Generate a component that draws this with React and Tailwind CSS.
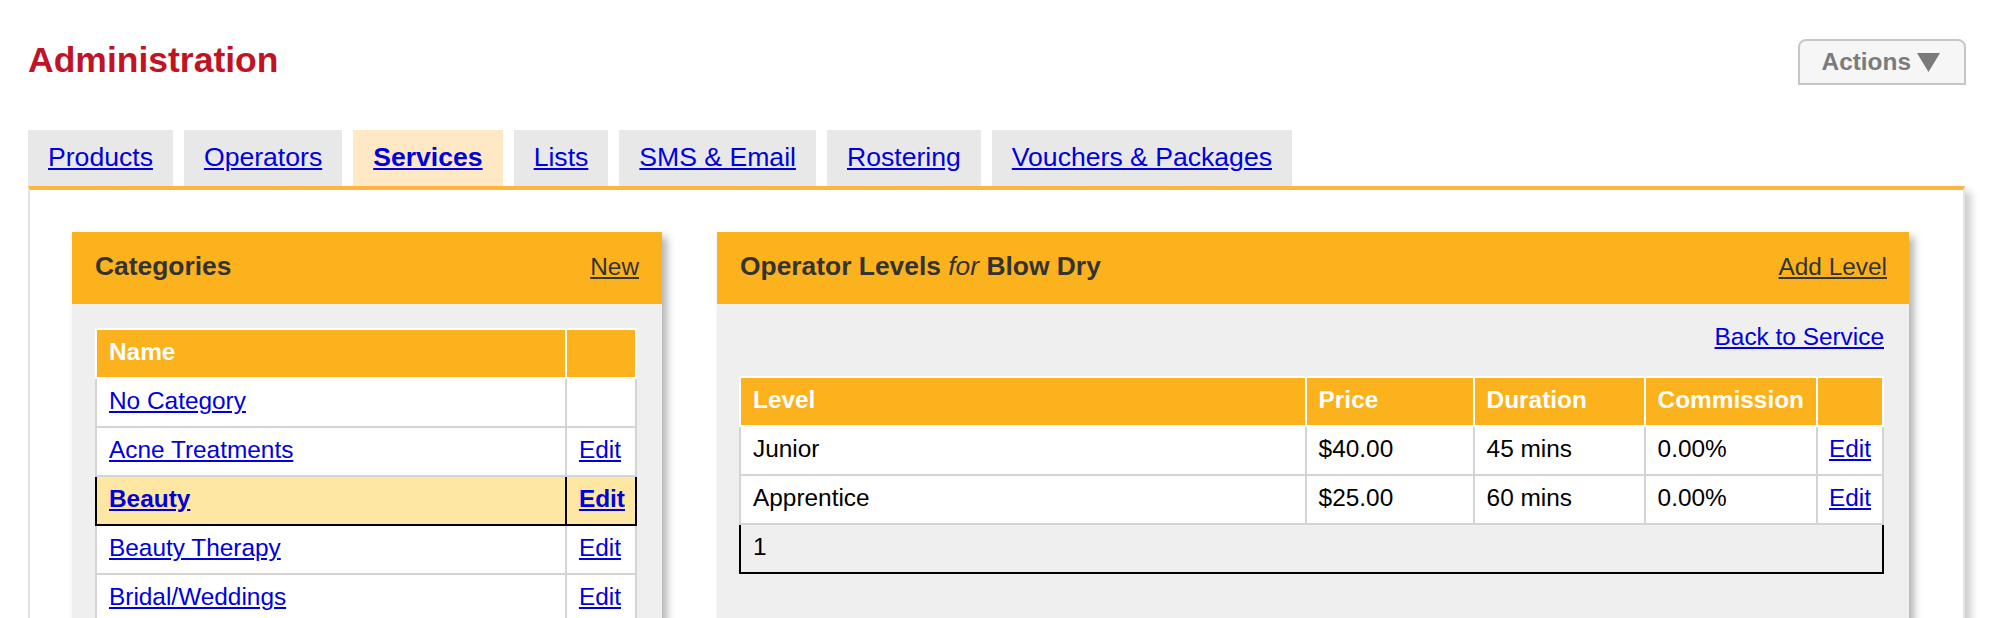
import React from "react";

const tabs = [
  { label: "Products" },
  { label: "Operators" },
  { label: "Services", active: true },
  { label: "Lists" },
  { label: "SMS & Email" },
  { label: "Rostering" },
  { label: "Vouchers & Packages" },
];

const categories = [
  { name: "No Category", edit: false },
  { name: "Acne Treatments", edit: true },
  { name: "Beauty", edit: true, active: true },
  { name: "Beauty Therapy", edit: true },
  { name: "Bridal/Weddings", edit: true },
  { name: "Colour", edit: true },
  { name: "Cuts", edit: true },
];

const levels = [
  { level: "Junior", price: "$40.00", duration: "45 mins", commission: "0.00%" },
  { level: "Apprentice", price: "$25.00", duration: "60 mins", commission: "0.00%" },
];

function CategoryRow({ c }) {
  if (c.active) {
    return (
      <tr className="bg-[#fee7a2]">
        <td className="border-l-2 border-r-2 border-b-2 border-black pl-[12px] pr-[12px] pt-[7px] pb-[11px] leading-[29px]">
          <a href="#" className="font-bold text-[#0000dd] underline">{c.name}</a>
        </td>
        <td className="border-r-2 border-b-2 border-black pl-[12px] pr-[10px] pt-[7px] pb-[11px] leading-[29px]">
          <a href="#" className="font-bold text-[#0000dd] underline">Edit</a>
        </td>
      </tr>
    );
  }
  return (
    <tr className="bg-white">
      <td className="border-l-2 border-r-2 border-b-2 border-[#d4d4d4] pl-[12px] pr-[12px] pt-[7px] pb-[11px] leading-[29px]">
        <a href="#" className="text-[#0000dd] underline">{c.name}</a>
      </td>
      <td className="border-r-2 border-b-2 border-[#d4d4d4] pl-[12px] pr-[10px] pt-[7px] pb-[11px] leading-[29px]">
        {c.edit ? <a href="#" className="text-[#0000dd] underline">Edit</a> : null}
      </td>
    </tr>
  );
}

export default function App() {
  return (
    <div className="h-[618px] overflow-hidden bg-white pl-[28px] pr-[49px] font-['Liberation_Sans',Arial,Helvetica,sans-serif] text-[24.4px] text-black">
      <div className="flex items-start justify-between pt-[39px]">
        <h1 className="mt-[1px] text-[35.5px] font-bold leading-[40px] text-[#c01425]">Administration</h1>
        <button className="mr-[-1px] flex h-[46px] items-center gap-[6px] rounded-t-[8px] border-2 border-[#c6c6c6] bg-[#f6f6f6] pl-[22px] pr-[24px] text-[24.4px] font-bold leading-[28px] text-[#7b7b7b]">
          <span>Actions</span>
          <svg width="23" height="19" viewBox="0 0 23 19" aria-hidden="true">
            <polygon points="0,0 23,0 11.5,19" fill="#7b7b7b" />
          </svg>
        </button>
      </div>

      <nav className="mt-[45px] flex gap-[11px]">
        {tabs.map((t) =>
          t.active ? (
            <div key={t.label} className="bg-[#ffe9c4] px-[20px] pt-[12px] pb-[14px] text-[26.6px] leading-[30px]">
              <a href="#" className="font-bold text-[#0000dd] underline">{t.label}</a>
            </div>
          ) : (
            <div key={t.label} className="bg-[#e8e8e8] px-[20px] pt-[12px] pb-[14px] text-[26.6px] leading-[30px]">
              <a href="#" className="text-[#0000dd] underline">{t.label}</a>
            </div>
          )
        )}
      </nav>

      <div className="flex min-h-[700px] items-stretch gap-[55px] border-x-2 border-t-4 border-x-[#e4e4e4] border-t-[#fdb53f] bg-white pt-[42px] pl-[42px] shadow-[6px_6px_8px_rgba(0,0,0,0.2)]">
        {/* Categories panel */}
        <div className="w-[590px] shrink-0 bg-[#efefef] shadow-[5px_5px_8px_rgba(0,0,0,0.3)]">
          <div className="flex h-[72px] items-baseline justify-between bg-[#fcb21d] pl-[23px] pr-[23px] pt-[19px]">
            <h2 className="text-[26.4px] font-bold leading-[30px] text-[#333]">Categories</h2>
            <a href="#" className="text-[24.4px] leading-[30px] text-[#333] underline">New</a>
          </div>
          <div className="pl-[23px] pr-[25px] pt-[24px] pb-[40px]">
            <table className="w-full border-separate border-spacing-0">
              <thead>
                <tr className="bg-[#fcb21d]">
                  <th className="border-2 border-white pl-[12px] pr-[12px] pt-[7px] pb-[11px] text-left font-bold leading-[29px] text-white">Name</th>
                  <th className="w-[67px] border-t-2 border-r-2 border-b-2 border-white pl-[12px] pr-[10px] pt-[7px] pb-[11px] leading-[29px]"></th>
                </tr>
              </thead>
              <tbody>
                {categories.map((c) => (
                  <CategoryRow key={c.name} c={c} />
                ))}
              </tbody>
            </table>
          </div>
        </div>

        {/* Operator levels panel */}
        <div className="w-[1192px] shrink-0 bg-[#efefef] shadow-[5px_5px_8px_rgba(0,0,0,0.3)]">
          <div className="flex h-[72px] items-baseline justify-between bg-[#fcb21d] pl-[23px] pr-[22px] pt-[19px]">
            <h2 className="text-[26.4px] font-bold leading-[30px] text-[#333]">
              Operator Levels <span className="font-normal italic">for</span> Blow Dry
            </h2>
            <a href="#" className="text-[24.4px] leading-[30px] text-[#333] underline">Add Level</a>
          </div>
          <div className="pl-[22px] pr-[25px] pt-[19px] pb-[40px]">
            <div className="mb-[25px] text-right leading-[28px]">
              <a href="#" className="text-[#0000dd] underline">Back to Service</a>
            </div>
            <table className="w-full border-separate border-spacing-0">
              <thead>
                <tr className="bg-[#fcb21d] text-left font-bold text-white">
                  <th className="border-2 border-white pl-[12px] pr-[12px] pt-[7px] pb-[11px] text-left leading-[29px]">Level</th>
                  <th className="w-[168px] border-t-2 border-r-2 border-b-2 border-white pl-[12px] pr-[12px] pt-[7px] pb-[11px] text-left leading-[29px]">Price</th>
                  <th className="w-[171px] border-t-2 border-r-2 border-b-2 border-white pl-[12px] pr-[12px] pt-[7px] pb-[11px] text-left leading-[29px]">Duration</th>
                  <th className="w-[170px] border-t-2 border-r-2 border-b-2 border-white pl-[12px] pr-[12px] pt-[7px] pb-[11px] text-left leading-[29px]">Commission</th>
                  <th className="w-[65px] border-t-2 border-r-2 border-b-2 border-white pl-[11px] pr-[11px] pt-[7px] pb-[11px] leading-[29px]"></th>
                </tr>
              </thead>
              <tbody>
                {levels.map((l) => (
                  <tr key={l.level} className="bg-white">
                    <td className="border-l-2 border-r-2 border-b-2 border-[#d4d4d4] pl-[12px] pr-[12px] pt-[7px] pb-[11px] leading-[29px]">{l.level}</td>
                    <td className="border-r-2 border-b-2 border-[#d4d4d4] pl-[12px] pr-[12px] pt-[7px] pb-[11px] leading-[29px]">{l.price}</td>
                    <td className="border-r-2 border-b-2 border-[#d4d4d4] pl-[12px] pr-[12px] pt-[7px] pb-[11px] leading-[29px]">{l.duration}</td>
                    <td className="border-r-2 border-b-2 border-[#d4d4d4] pl-[12px] pr-[12px] pt-[7px] pb-[11px] leading-[29px]">{l.commission}</td>
                    <td className="border-r-2 border-b-2 border-[#d4d4d4] pl-[11px] pr-[11px] pt-[7px] pb-[11px] leading-[29px]">
                      <a href="#" className="text-[#0000dd] underline">Edit</a>
                    </td>
                  </tr>
                ))}
                <tr>
                  <td colSpan={5} className="border-l-2 border-r-2 border-b-2 border-black pl-[12px] pr-[12px] pt-[7px] pb-[11px] leading-[29px]">1</td>
                </tr>
              </tbody>
            </table>
          </div>
        </div>
      </div>
    </div>
  );
}
